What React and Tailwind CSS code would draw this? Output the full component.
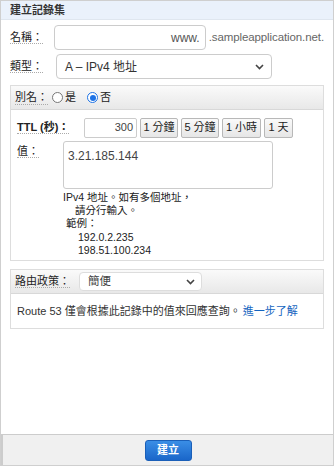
import React from "react";

const font = { fontFamily: '"Liberation Sans", "Noto Sans CJK TC", sans-serif' };

const Label = ({ children, className = "" }) => (
  <span className={`border-b border-dotted border-[#aaa] leading-[14px] ${className}`}>{children}</span>
);

const Chevron = () => (
  <svg width="9" height="6" viewBox="0 0 9 6" className="shrink-0">
    <path d="M1 1 L4.5 4.5 L8 1" fill="none" stroke="#444" strokeWidth="1.6" />
  </svg>
);

const Radio = ({ checked }) =>
  checked ? (
    <span className="w-[11px] h-[11px] rounded-full border border-[#1e73e6] bg-white flex items-center justify-center">
      <span className="w-[6px] h-[6px] rounded-full bg-[#1e73e6]" />
    </span>
  ) : (
    <span className="w-[11px] h-[11px] rounded-full border border-[#777] bg-white" />
  );

const TtlButton = ({ children, w }) => (
  <button className={`h-[20px] ${w} border border-[#b8b8b8] rounded-[2px] bg-gradient-to-b from-[#fafafa] to-[#e6e6e6] text-[11px] text-[#222] flex items-center justify-center`}>
    {children}
  </button>
);

export default function App() {
  return (
    <div style={font} className="w-[334px] h-[466px] border border-[#cfcfcf] bg-white flex flex-col text-[11px] text-[#222]">
      <div className="h-[19px] bg-[#eaf1fb] border-b border-[#dfe6ef] flex items-center pl-[9px] text-[11px] font-bold text-[#333]">
        建立記錄集
      </div>

      <div className="flex-1 px-[9px] pt-[5px]">
        <div className="flex items-center h-[25px]">
          <div className="w-[46px]"><Label>名稱：</Label></div>
          <div className="w-[159px] h-[25px] border border-[#ccc] rounded-[4px] flex items-center justify-end pr-[5px] text-[12px] text-[#555]">
            www.
          </div>
          <span className="ml-[3px] text-[11.5px] text-[#666] tracking-[-0.1px]">.sampleapplication.net.</span>
        </div>

        <div className="flex items-center h-[25px] mt-[4px]">
          <div className="w-[46px]"><Label>類型：</Label></div>
          <div className="w-[216px] h-[25px] border border-[#ccc] rounded-[4px] flex items-center justify-between pl-[8px] pr-[7px] text-[12px] text-[#333]">
            <span>A – IPv4 地址</span>
            <Chevron />
          </div>
        </div>

        <div className="mt-[6px] border border-[#ddd]">
          <div className="h-[24px] bg-gradient-to-b from-[#fafafa] to-[#e8e8e8] border-b border-[#d8d8d8] flex items-center pl-[4px]">
            <Label>別名：</Label>
            <div className="ml-[4px] flex items-center gap-[2px]">
              <Radio />
              <span>是</span>
            </div>
            <div className="ml-[11px] flex items-center gap-[2px]">
              <Radio checked />
              <span>否</span>
            </div>
          </div>

          <div className="pl-[6px] pt-[7px] pb-[3px]">
            <div className="flex items-center h-[21px]">
              <div className="w-[67px]"><Label className="font-bold">TTL (秒)：</Label></div>
              <div className="w-[53px] h-[20px] border border-[#ccc] rounded-[2px] flex items-center justify-end pr-[3px] text-[11px] text-[#444]">
                300
              </div>
              <div className="ml-[3px] flex gap-[3px]">
                <TtlButton w="w-[38px]">1 分鐘</TtlButton>
                <TtlButton w="w-[38px]">5 分鐘</TtlButton>
                <TtlButton w="w-[39px]">1 小時</TtlButton>
                <TtlButton w="w-[29px]">1 天</TtlButton>
              </div>
            </div>

            <div className="flex mt-[3px]">
              <div className="w-[46px] pt-[2px]"><Label>值：</Label></div>
              <div>
                <div className="w-[210px] h-[48px] border border-[#ccc] rounded-[3px] px-[4px] pt-[5px] text-[12px] text-[#444]">
                  3.21.185.144
                </div>
                <div className="mt-[2px] text-[10.5px] leading-[13.2px] text-[#222]">
                  <div>IPv4 地址。如有多個地址，</div>
                  <div className="pl-[12px]">請分行輸入。</div>
                  <div className="pl-[3px]">範例：</div>
                  <div className="pl-[15px]">192.0.2.235</div>
                  <div className="pl-[15px]">198.51.100.234</div>
                </div>
              </div>
            </div>
          </div>
        </div>

        <div className="mt-[8px] border border-[#ddd]">
          <div className="h-[24px] bg-gradient-to-b from-[#fafafa] to-[#e8e8e8] border-b border-[#d8d8d8] flex items-center pl-[4px]">
            <div className="w-[64px]"><Label>路由政策：</Label></div>
            <div className="w-[123px] h-[19px] bg-white border border-[#ddd] rounded-[4px] flex items-center justify-between pl-[8px] pr-[6px] text-[11.5px] text-[#444]">
              <span>簡便</span>
              <Chevron />
            </div>
          </div>
          <div className="h-[34px] flex items-center pl-[6px] text-[11px] text-[#333]">
            <span>Route 53 僅會根據此記錄中的值來回應查詢。</span>
            <a className="ml-[2px] text-[#1565c0]">進一步了解</a>
          </div>
        </div>
      </div>

      <div className="h-[31px] bg-[#f0f0f0] border-t border-[#ccc] border-l-2 border-l-[#ccc] flex items-center justify-center">
        <button className="w-[47px] h-[21px] rounded-[3px] bg-gradient-to-b from-[#3a8ee6] to-[#1a66c9] border border-[#1a5fb8] text-white font-bold text-[11px]">
          建立
        </button>
      </div>
    </div>
  );
}
